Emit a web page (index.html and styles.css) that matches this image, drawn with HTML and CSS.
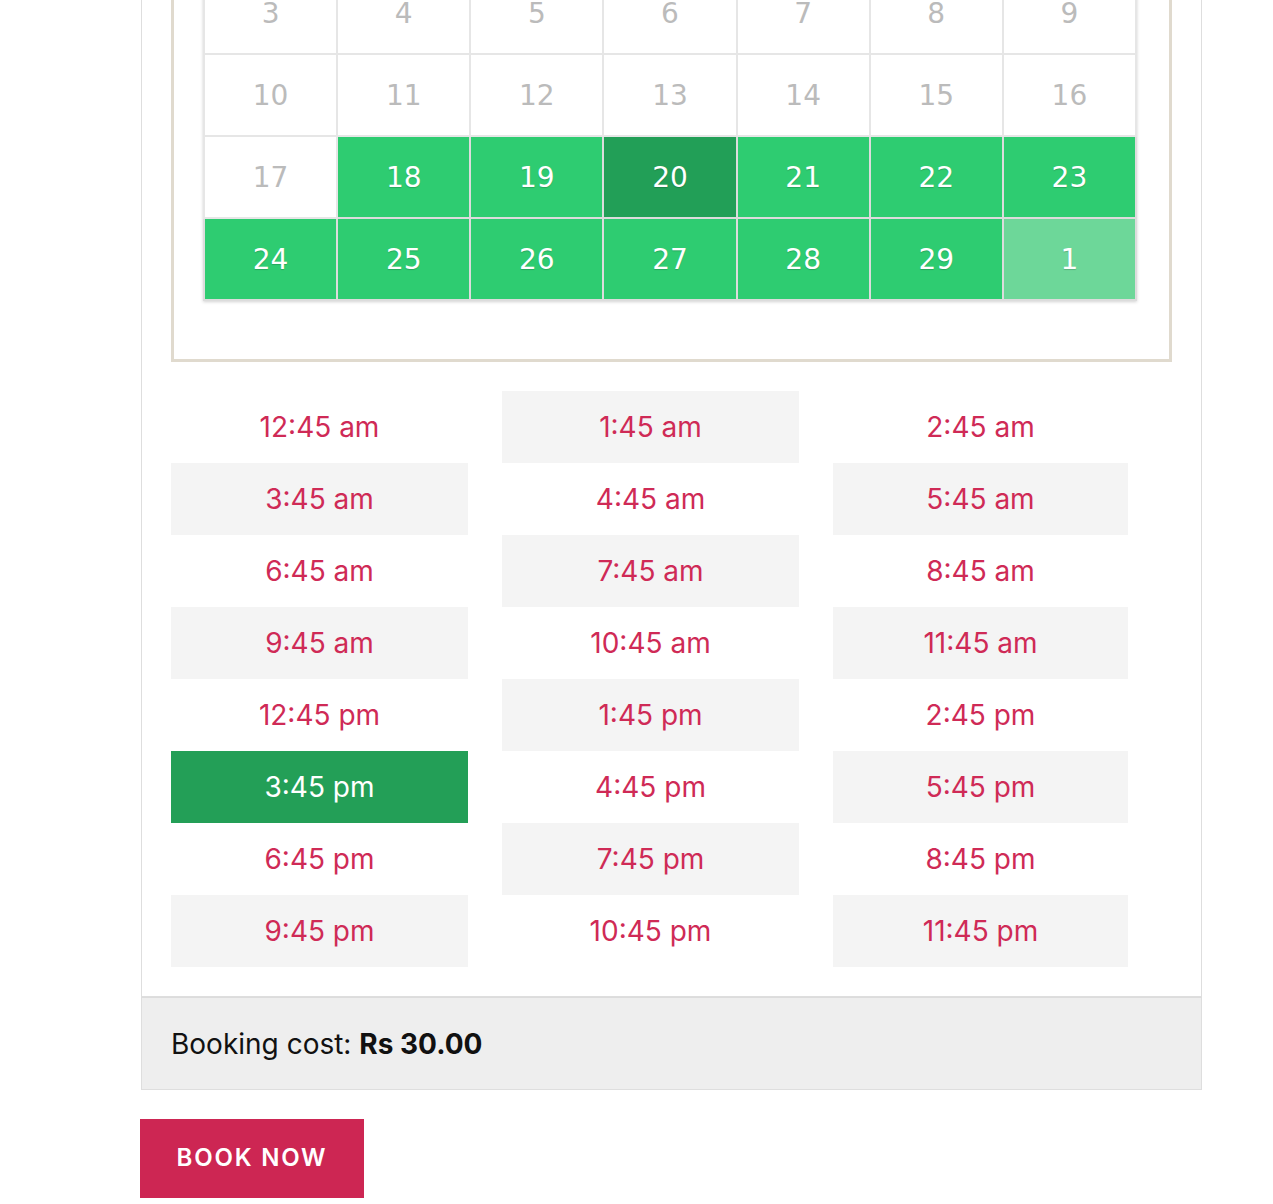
FILE: index.html
```html
<!DOCTYPE html>
<html>
<head>
<meta charset="utf-8">
<link rel="stylesheet" href="styles.css">
</head>
<body>
<div class="page">
  <div class="booking-box">
    <div class="picker-frame">
      <table class="calendar">
        <tbody>
          <tr><td>3</td><td>4</td><td>5</td><td>6</td><td>7</td><td>8</td><td>9</td></tr>
          <tr><td>10</td><td>11</td><td>12</td><td>13</td><td>14</td><td>15</td><td>16</td></tr>
          <tr><td>17</td><td class="avail">18</td><td class="avail">19</td><td class="avail selected">20</td><td class="avail">21</td><td class="avail">22</td><td class="avail">23</td></tr>
          <tr><td class="avail">24</td><td class="avail">25</td><td class="avail">26</td><td class="avail">27</td><td class="avail">28</td><td class="avail">29</td><td class="avail other">1</td></tr>
        </tbody>
      </table>
    </div>
    <ul class="slots">
      <li>12:45 am</li><li>1:45 am</li><li>2:45 am</li>
      <li>3:45 am</li><li>4:45 am</li><li>5:45 am</li>
      <li>6:45 am</li><li>7:45 am</li><li>8:45 am</li>
      <li>9:45 am</li><li>10:45 am</li><li>11:45 am</li>
      <li>12:45 pm</li><li>1:45 pm</li><li>2:45 pm</li>
      <li class="chosen">3:45 pm</li><li>4:45 pm</li><li>5:45 pm</li>
      <li>6:45 pm</li><li>7:45 pm</li><li>8:45 pm</li>
      <li>9:45 pm</li><li>10:45 pm</li><li>11:45 pm</li>
    </ul>
  </div>
  <div class="cost"><span>Booking cost: <strong>Rs 30.00</strong></span></div>
  <button class="book-btn">BOOK NOW</button>
</div>
</body>
</html>
```
FILE: styles.css
```css
html, body {
  margin: 0;
  padding: 0;
  background: #fff;
}
body {
  font-family: Inter, "Noto Sans", sans-serif;
  overflow: hidden;
}
.page {
  width: 1061px;
  margin-left: 141px;
  margin-top: -29px;
}
.booking-box {
  border: 1px solid #dedede;
  border-top: none;
  padding: 0 29px 29px 29px;
}
.picker-frame {
  border: 3px solid #e0dace;
  border-top: none;
  padding: 0 31px 58px 29px;
}
.calendar {
  width: 934px;
  table-layout: fixed;
  border-collapse: collapse;
  border: 2px solid #e4e0d6;
  box-shadow: 0 1px 3px rgba(0,0,0,0.18);
  font-family: "DejaVu Sans", Verdana, sans-serif;
}
.calendar td {
  height: 80px;
  border: 2px solid #e6e6e6;
  text-align: center;
  vertical-align: middle;
  font-size: 28px;
  color: #bbbbbb;
  background: #fff;
  padding: 0;
}
.calendar td.avail {
  background: #2ecc71;
  color: #fff;
  text-shadow: 0 1px 1px rgba(0,0,0,0.18);
  border-color: #dcdcdc;
}
.calendar td.selected {
  background: #229f57;
}
.calendar td.other {
  background: #6dd799;
}
.slots {
  list-style: none;
  margin: 29px 0 0 0;
  padding: 0;
  display: grid;
  grid-template-columns: 297px 297px 295px;
  column-gap: 34px;
}
.slots li {
  height: 72px;
  display: flex;
  align-items: center;
  justify-content: center;
  font-size: 28px;
  color: #cf2a56;
  background: #fff;
}
.slots li:nth-child(even) {
  background: #f4f4f4;
}
.slots li.chosen {
  background: #239f57;
  color: #fff;
}
.cost {
  background: #eeeeee;
  border: 1px solid #dedede;
  border-top: 1px solid #dcdcdc;
  height: 93px;
  box-sizing: border-box;
  display: flex;
  align-items: center;
  padding: 0 29px;
  font-size: 28px;
  color: #111;
}
.cost strong {
  font-weight: 700;
}
.book-btn {
  margin-top: 29px;
  margin-left: -1px;
  width: 224px;
  height: 79px;
  border: none;
  background: #cd2653;
  color: #fff;
  font-family: Inter, "Noto Sans", sans-serif;
  font-size: 24px;
  font-weight: 600;
  letter-spacing: 1.8px;
  padding: 0 0 2px 0;
  cursor: pointer;
}
```
